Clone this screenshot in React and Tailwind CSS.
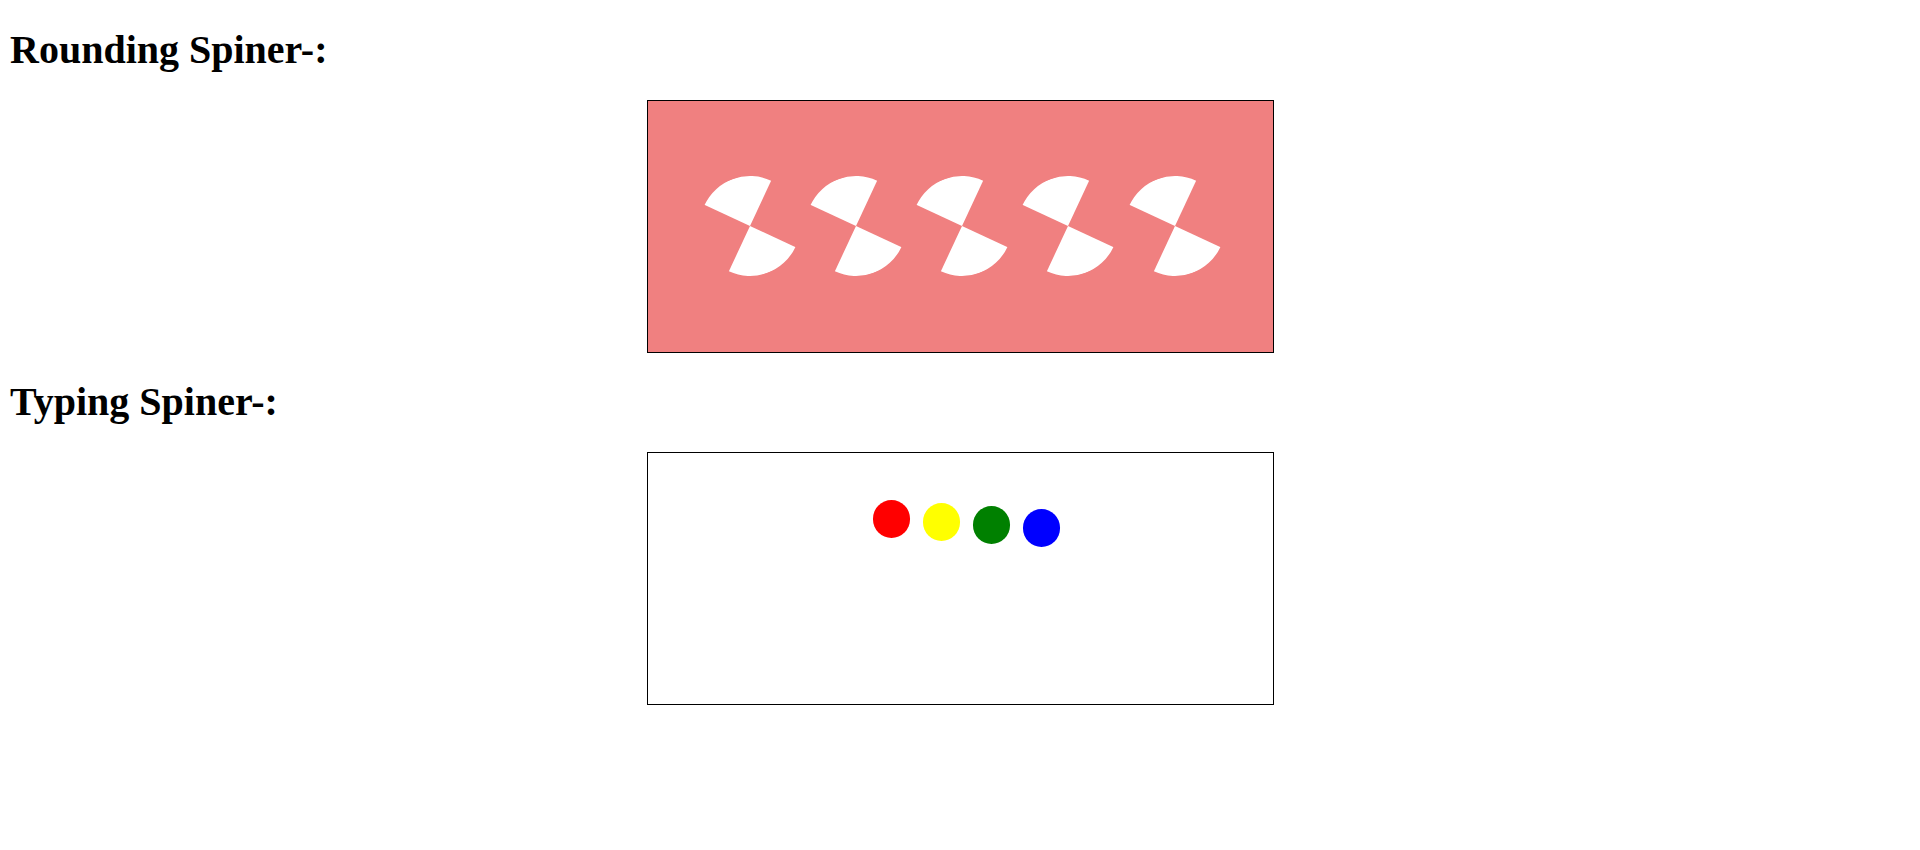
const serif = { fontFamily: '"Liberation Serif", "Times New Roman", serif' };

// two opposite quarter sectors, caught mid-spin
function Sector() {
  return (
    <div className="h-0 w-0 shrink-0 rounded-full border-[50px] border-transparent border-t-white border-b-white rotate-[-20deg]" />
  );
}

const dots = [
  { color: "bg-[#ff0000]", offset: "mt-[47px]" },
  { color: "bg-[#ffff00]", offset: "mt-[50px]" },
  { color: "bg-[#008000]", offset: "mt-[53px]" },
  { color: "bg-[#0000ff]", offset: "mt-[56px]" },
];

export default function App() {
  return (
    <div className="min-h-[850px] bg-white px-[10px] text-black" style={serif}>
      {/* ── Rounding ───────────────────────────── */}
      <h1 className="my-[26.8px] text-[40px] font-bold leading-[46px]">Rounding Spiner-:</h1>
      <div className="mx-auto flex h-[253px] w-[627px] items-start gap-[6.25px] border border-black bg-[#f08080] pl-[52px] pt-[75px]">
        <Sector />
        <Sector />
        <Sector />
        <Sector />
        <Sector />
      </div>

      {/* ── Typing ─────────────────────────────── */}
      <h1 className="my-[26.8px] text-[40px] font-bold leading-[46px]">Typing Spiner-:</h1>
      <div className="mx-auto flex h-[253px] w-[627px] items-start gap-[12.5px] border border-black bg-white pl-[225px]">
        {dots.map((d, i) => (
          <span key={i} className={`block h-[37.5px] w-[37.5px] shrink-0 rounded-full ${d.color} ${d.offset}`} />
        ))}
      </div>
    </div>
  );
}
